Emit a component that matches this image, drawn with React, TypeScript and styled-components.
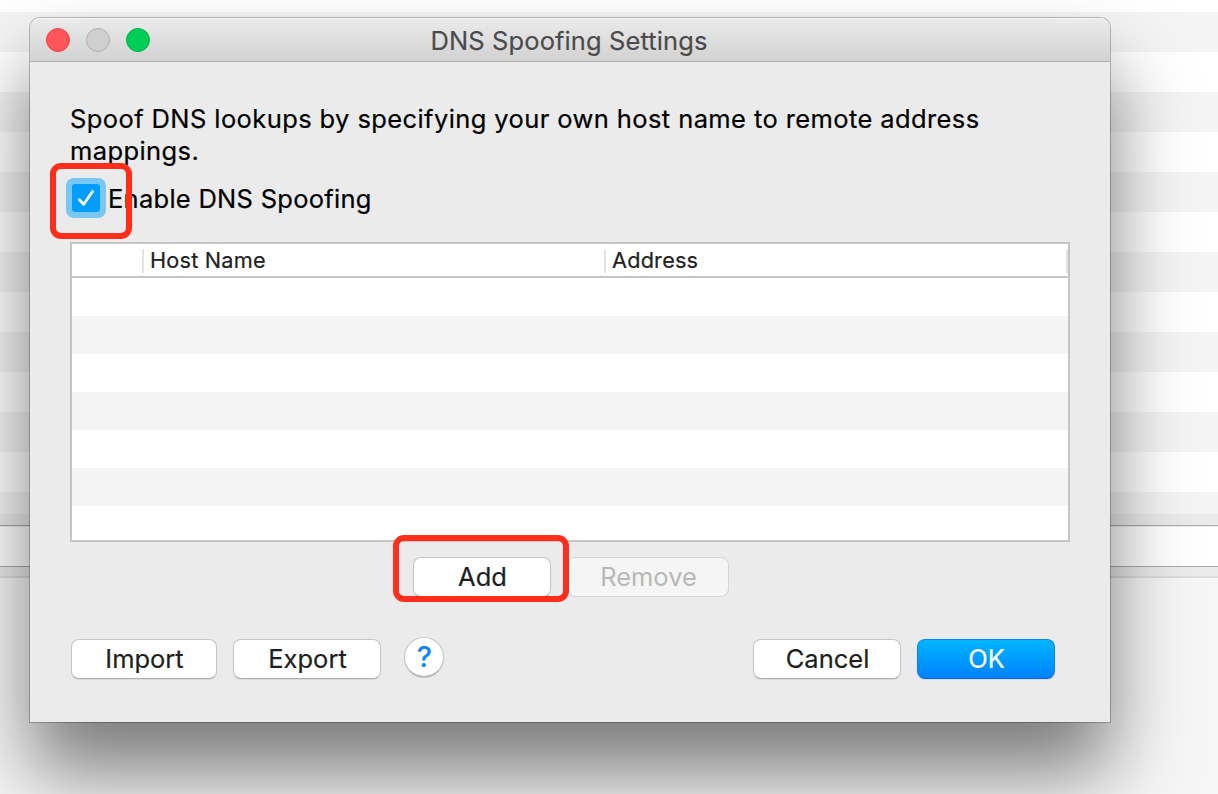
import React from "react";
import styled, { createGlobalStyle } from "styled-components";

const GlobalStyle = createGlobalStyle`
  *, *::before, *::after { box-sizing: border-box; }
  html, body { margin: 0; padding: 0; overflow: hidden; }
  body { font-family: Inter, "Liberation Sans", sans-serif; color: #000; }
`;

const Desktop = styled.div`
  position: relative;
  width: 1218px;
  height: 794px;
  overflow: hidden;
  background: #f6f6f6;
`;

const StripedList = styled.div`
  height: 514px;
  background: repeating-linear-gradient(#fff 0 40px, #f4f4f4 40px 80px);
  background-position: 0 -28px;
  background-size: 100% 80px;
`;

const Divider = styled.div`
  height: 11px;
  background: #ebebeb;
`;

const FilterField = styled.div`
  height: 42px;
  background: #fff;
  border-top: 1px solid #a9a9a9;
  border-bottom: 1px solid #a9a9a9;
  box-shadow: inset 0 1px #eee;
`;

const LowerDivider = styled.div`
  height: 11px;
  background: #ebebeb;
  border-bottom: 2px solid #dddddd;
`;

const Dialog = styled.section`
  position: absolute;
  left: 30px;
  top: 18px;
  width: 1080px;
  height: 704px;
  background: #ebebeb;
  border-radius: 10px 10px 0 0;
  box-shadow: 0 0 0 1px rgba(0, 0, 0, 0.24), 0 50px 78px rgba(0, 0, 0, 0.5);
`;

const TitleBar = styled.header`
  display: grid;
  grid-template-columns: 1fr auto 1fr;
  align-items: center;
  height: 44px;
  padding: 0 16px;
  border-radius: 10px 10px 0 0;
  border-bottom: 1px solid #b0b0b0;
  background: linear-gradient(#ebebeb, #d2d2d2);
  box-shadow: inset 0 1px #f6f6f6;
`;

const Lights = styled.div`
  display: flex;
  gap: 16px;
`;

const Light = styled.span<{ $fill: string; $edge: string }>`
  width: 24px;
  height: 24px;
  border-radius: 50%;
  background: ${(p) => p.$fill};
  border: 1px solid ${(p) => p.$edge};
`;

const Title = styled.h1`
  margin: 2px 0 0 -2px;
  font-size: 25.5px;
  font-weight: 400;
  line-height: 32px;
  letter-spacing: 0.1px;
  color: #4b4b4b;
  -webkit-text-stroke: 0.15px;
  white-space: nowrap;
`;

const Body = styled.div`
  display: flex;
  flex-direction: column;
  padding: 41px 40px 0;
`;

const Description = styled.p`
  margin: 0;
  font-size: 25.5px;
  line-height: 32px;
  letter-spacing: 0.4px;
  -webkit-text-stroke: 0.2px;
  white-space: nowrap;
`;

const CheckRow = styled.label`
  display: flex;
  align-items: center;
  gap: 2px;
  height: 40px;
  margin: 11px 0 24px -4px;
  font-size: 25.5px;
  line-height: 32px;
  letter-spacing: 0.27px;
  -webkit-text-stroke: 0.2px;
`;

const CheckLabel = styled.span`
  padding-top: 2px;
`;

const CheckBox = styled.span`
  position: relative;
  display: flex;
  width: 40px;
  height: 40px;
  padding: 6px;
  border-radius: 8px;
  background: #78c8f2;
`;

const CheckFace = styled.svg`
  width: 28px;
  height: 28px;
  border-radius: 3px;
  background: #039dff;
`;

const Table = styled.div`
  width: 1000px;
  height: 300px;
  border: 2px solid #c5c5c5;
  background: #fff;
`;

const HeadRow = styled.div`
  display: grid;
  grid-template-columns: 72px 462px 462px;
  align-items: center;
  height: 34px;
  border-bottom: 2px solid #c5c5c5;
`;

const HeadCell = styled.div`
  height: 24px;
  margin-top: 2px;
  padding-left: 6px;
  border-right: 2px solid #e3e3e3;
  font-size: 21.7px;
  line-height: 23px;
  letter-spacing: 0.2px;
  -webkit-text-stroke: 0.2px;
  color: #222;
`;

const Rows = styled.div`
  height: 262px;
  background: repeating-linear-gradient(#fff 0 38px, #f4f4f4 38px 76px);
`;

const EditRow = styled.div`
  display: flex;
  gap: 16px;
  margin: 15px 0 0 343px;
`;

const Footer = styled.footer`
  display: flex;
  align-items: flex-start;
  gap: 16px;
  margin-top: 42px;
  padding: 0 15px 0 1px;
`;

const Button = styled.button<{ $width: number; $primary?: boolean }>`
  width: ${(p) => p.$width}px;
  height: 40px;
  padding: 0 0 0 1px;
  border: 1px solid ${(p) => (p.$primary ? "#0b84f0" : "#c6c6c6")};
  border-bottom-color: ${(p) => (p.$primary ? "#0068e0" : "#acacac")};
  border-radius: 8px;
  background: ${(p) => (p.$primary ? "linear-gradient(#00b8ff, #007fff)" : "#fff")};
  background-origin: border-box;
  box-shadow: 0 1px 1px rgba(0, 0, 0, 0.08);
  font: 400 25.5px/38px Inter, "Liberation Sans", sans-serif;
  -webkit-text-stroke: 0.2px;
  color: ${(p) => (p.$primary ? "#fff" : "#1e1e1e")};

  &:disabled {
    border-color: #d5d5d5;
    background: #f5f5f5;
    box-shadow: none;
    color: #b8b8b8;
    -webkit-text-stroke: 0;
  }
`;

const HelpButton = styled.button`
  display: grid;
  place-items: center;
  width: 40px;
  height: 40px;
  margin: -2px auto 0 7px;
  padding: 0 0 0 1px;
  border: 1px solid #c8c8c8;
  border-bottom-color: #acacac;
  border-radius: 50%;
  background: #fff;
  box-shadow: 0 1px 1px rgba(0, 0, 0, 0.15);
  font: 500 29px/38px Inter, "Liberation Sans", sans-serif;
  color: #0a87ff;
`;

const Highlight = styled.div<{ $x: number; $y: number; $w: number; $h: number }>`
  position: absolute;
  left: ${(p) => p.$x}px;
  top: ${(p) => p.$y}px;
  width: ${(p) => p.$w}px;
  height: ${(p) => p.$h}px;
  border: 6px solid #ff2d1a;
  border-radius: 11px;
  pointer-events: none;
`;

export default function App() {
  return (
    <Desktop>
      <GlobalStyle />
      <StripedList />
      <Divider />
      <FilterField />
      <LowerDivider />
      <Dialog>
        <TitleBar>
          <Lights>
            <Light $fill="#ff5459" $edge="#f2434a" />
            <Light $fill="#cfcfcf" $edge="#b0b0b0" />
            <Light $fill="#00cd55" $edge="#00b446" />
          </Lights>
          <Title>DNS Spoofing Settings</Title>
        </TitleBar>
        <Body>
          <Description>
            Spoof DNS lookups by specifying your own host name to remote address
            <br />
            mappings.
          </Description>
          <CheckRow>
            <CheckBox role="checkbox" aria-checked="true">
              <CheckFace viewBox="0 0 28 28" fill="none">
                <path d="M7.3 15.7 11.7 20.3 20.5 7.5" stroke="#fff" strokeWidth="2.8" strokeLinecap="round" strokeLinejoin="round" />
              </CheckFace>
            </CheckBox>
            <CheckLabel>Enable DNS Spoofing</CheckLabel>
          </CheckRow>
          <Table>
            <HeadRow>
              <HeadCell />
              <HeadCell>Host Name</HeadCell>
              <HeadCell>Address</HeadCell>
            </HeadRow>
            <Rows />
          </Table>
          <EditRow>
            <Button $width={138}>Add</Button>
            <Button $width={162} disabled>Remove</Button>
          </EditRow>
          <Footer>
            <Button $width={146}>Import</Button>
            <Button $width={148}>Export</Button>
            <HelpButton>?</HelpButton>
            <Button $width={148}>Cancel</Button>
            <Button $width={138} $primary>OK</Button>
          </Footer>
        </Body>
      </Dialog>
      <Highlight $x={50} $y={163} $w={82} $h={76} />
      <Highlight $x={393} $y={535} $w={176} $h={67} />
    </Desktop>
  );
}
